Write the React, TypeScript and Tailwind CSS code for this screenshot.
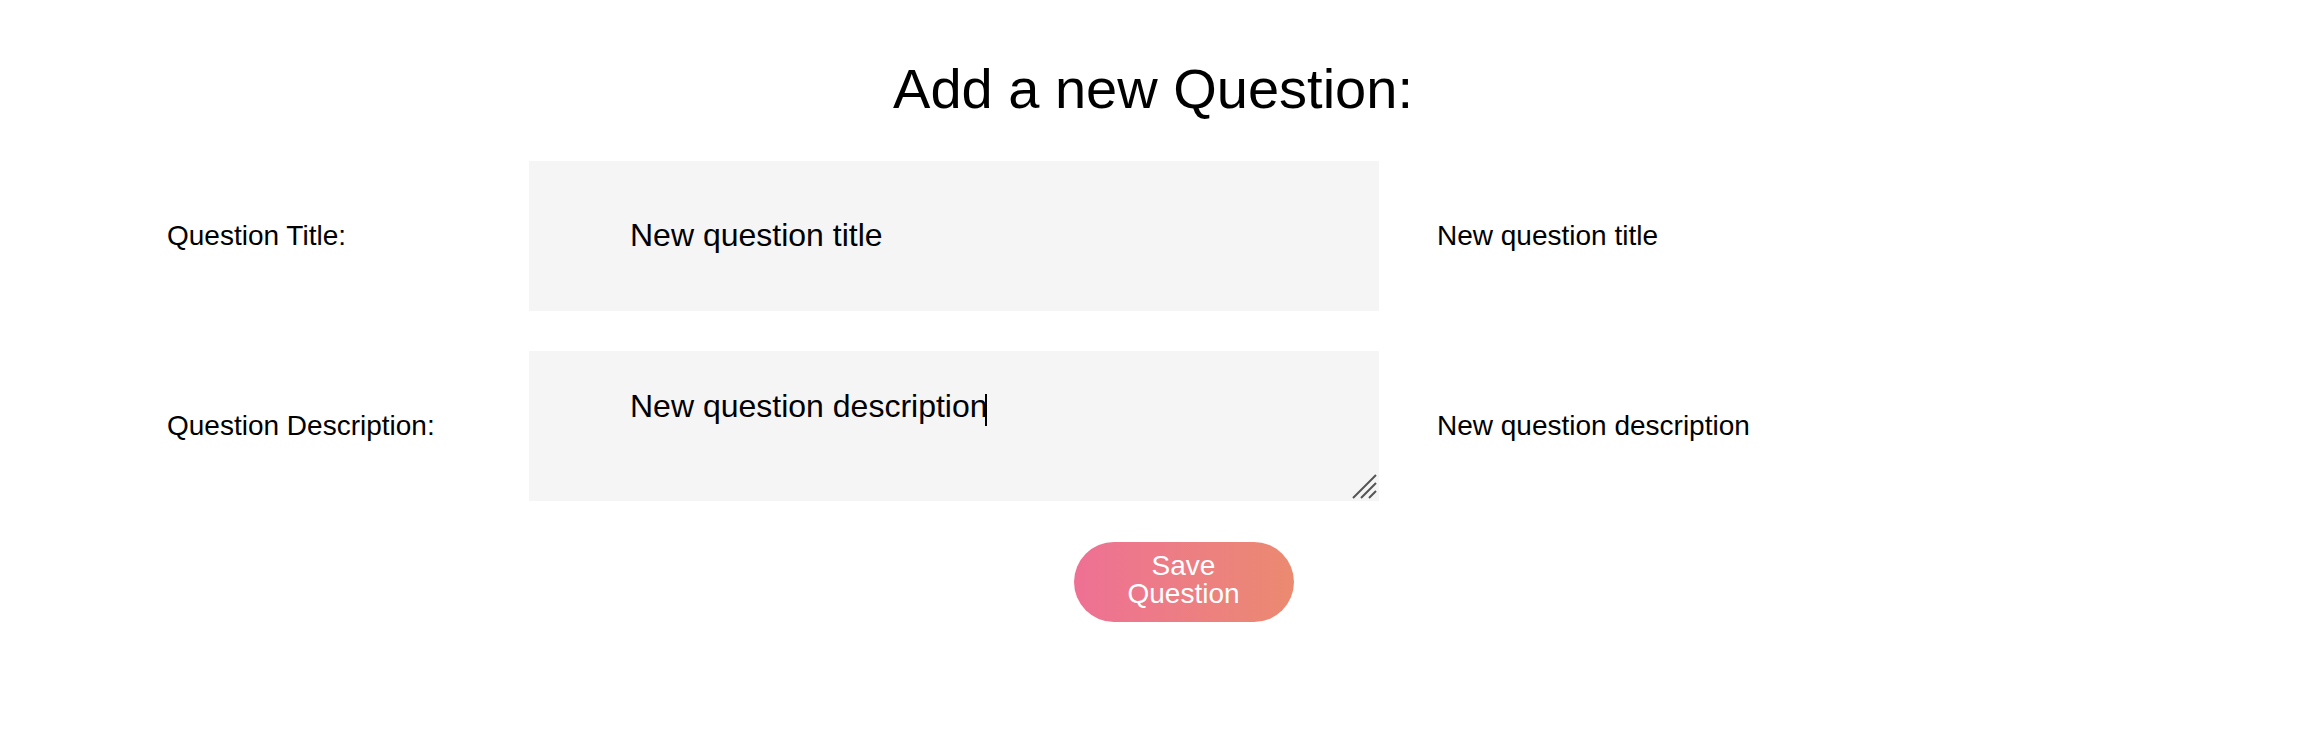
import React, { useState } from 'react';

const font = "font-['Liberation_Sans',Arial,sans-serif]";

function ResizeGrip() {
  return (
    <svg
      className="absolute right-[2px] bottom-[2px] pointer-events-none"
      width="26"
      height="26"
      viewBox="0 0 26 26"
    >
      <path d="M2 25 L25 2 M10 25 L25 10 M18 25 L25 18" stroke="#555" strokeWidth="2" fill="none" />
    </svg>
  );
}

export default function App() {
  const [title, setTitle] = useState('New question title');
  const [description, setDescription] = useState('New question description');

  return (
    <div className={`${font} w-full min-h-[742px] bg-white text-black`}>
      <h1 className="pt-[57px] pr-[8px] text-center text-[56px] leading-[1.15] font-normal">
        Add a new Question:
      </h1>

      <div className="mt-[40px] flex flex-col gap-[40px] pl-[167px]">
        {/* Title row */}
        <div className="flex items-center">
          <label className="w-[362px] text-[28px] leading-none">Question Title:</label>
          <input
            value={title}
            onChange={(e) => setTitle(e.target.value)}
            className="w-[850px] h-[150px] bg-[#f5f5f5] px-[101px] pb-[2px] text-[32px] outline-none"
          />
          <span className="ml-[58px] text-[28px] leading-none">{title}</span>
        </div>

        {/* Description row */}
        <div className="flex items-center">
          <label className="w-[362px] text-[28px] leading-none">Question Description:</label>
          <div className="relative w-[850px] h-[150px]">
            <textarea
              value={description}
              onChange={(e) => setDescription(e.target.value)}
              className="block w-full h-full resize-none bg-[#f5f5f5] pt-[37px] px-[101px] text-[32px] leading-[1.15] outline-none"
            />
            <span className="absolute left-[456px] top-[43px] w-[2px] h-[32px] bg-black" />
            <ResizeGrip />
          </div>
          <span className="ml-[58px] text-[28px] leading-none">{description}</span>
        </div>
      </div>

      <div className="mt-[41px] flex justify-center pl-[53px]">
        <button className="w-[220px] h-[80px] rounded-full bg-linear-to-r from-[#ee7094] to-[#eb8a70] px-[30px] pb-[5px] text-white text-[28px] leading-[28px]">
          Save Question
        </button>
      </div>
    </div>
  );
}
